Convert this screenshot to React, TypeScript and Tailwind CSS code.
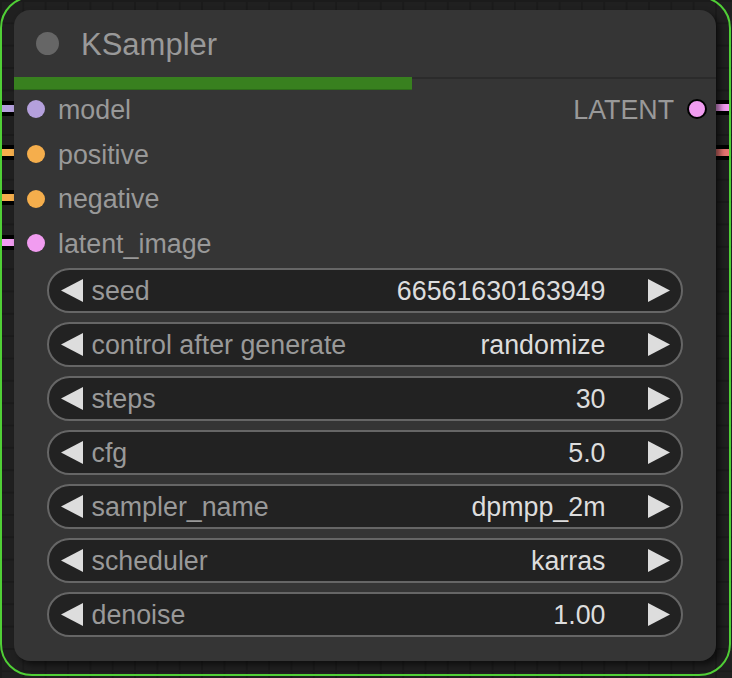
import React from "react";

const INPUTS = [
  { name: "model", color: "bg-[#b4a0dc]" },
  { name: "positive", color: "bg-[#f5ae4c]" },
  { name: "negative", color: "bg-[#f5ae4c]" },
  { name: "latent_image", color: "bg-[#f19cf0]" },
];

const WIDGETS = [
  { label: "seed", value: "66561630163949" },
  { label: "control after generate", value: "randomize" },
  { label: "steps", value: "30" },
  { label: "cfg", value: "5.0" },
  { label: "sampler_name", value: "dpmpp_2m" },
  { label: "scheduler", value: "karras" },
  { label: "denoise", value: "1.00" },
];

// link stubs leaving the node edges
const STUBS = [
  { top: "top-[101px]", left: "left-[2px]", color: "bg-[#b4a0dc]" },
  { top: "top-[145px]", left: "left-[2px]", color: "bg-[#f5ae4c]" },
  { top: "top-[190px]", left: "left-[2px]", color: "bg-[#f5ae4c]" },
  { top: "top-[235px]", left: "left-[2px]", color: "bg-[#f19cf0]" },
  { top: "top-[100px]", left: "left-[716px]", color: "bg-[#f19cf0]" },
  { top: "top-[145px]", left: "left-[716px]", color: "bg-[#e57370]" },
];

function Arrow({ dir }: { dir: "left" | "right" }) {
  return (
    <svg width="22" height="23" viewBox="0 0 22 23" className="shrink-0">
      <polygon points={dir === "left" ? "22,0 0,11.5 22,23" : "0,0 22,11.5 0,23"} fill="#dddddd" />
    </svg>
  );
}

export default function App() {
  return (
    <div
      className="relative w-[732px] h-[678px] overflow-hidden bg-[#202020] bg-[linear-gradient(#1b1b1b_2px,transparent_2px),linear-gradient(90deg,#1b1b1b_2px,transparent_2px)] bg-[length:22.35px_22.35px] pl-[14px] pt-[10px]"
      style={{ fontFamily: '"Liberation Sans", Arial, sans-serif' }}
    >
      {STUBS.map((s, i) => (
        <div key={i} className={`absolute ${s.top} ${s.left} w-[14px] h-[15px] bg-black py-[4px]`}>
          <div className={`h-[7px] ${s.color}`} />
        </div>
      ))}

      {/* Node */}
      <div className="relative w-[702px] h-[651px] rounded-[16px] bg-[#353535] shadow-[4px_4px_6px_rgba(0,0,0,0.55)] flex flex-col">
        {/* Title */}
        <div className="h-[67px] flex items-center shrink-0">
          <div className="ml-[22px] w-[23px] h-[23px] rounded-full bg-[#666666]" />
          <span className="ml-[22px] text-[31px] leading-none text-[#999999] translate-y-[1px]">KSampler</span>
        </div>

        {/* progress */}
        <div className="absolute left-0 top-[67px] w-[398px] h-[13px] bg-[#38801f] border-b border-[#2d6a1a]" />

        {/* Slots */}
        <div className="border-t-2 border-[#2b2b2b] pt-[8px] flex flex-col">
          {INPUTS.map((inp, i) => (
            <div key={inp.name} className="h-[44.7px] flex items-center">
              <div className={`ml-[13px] w-[18px] h-[18px] rounded-full ${inp.color}`} />
              <span className="ml-[13px] text-[26.8px] leading-none text-[#999999] translate-y-[1px]">{inp.name}</span>
              {i === 0 && (
                <div className="ml-auto flex items-center">
                  <span className="text-[26.8px] leading-none text-[#999999] translate-y-[1px]">LATENT</span>
                  <div className="ml-[13px] mr-[9px] w-[20px] h-[20px] rounded-full bg-[#f19cf0] border-2 border-black" />
                </div>
              )}
            </div>
          ))}
        </div>

        {/* Widgets */}
        <div className="mt-[2px] mx-[33px] flex flex-col gap-[9px]">
          {WIDGETS.map((w) => (
            <div
              key={w.label}
              className="h-[45px] rounded-full border-2 border-[#666666] bg-[#222222] flex items-center pl-[11.5px] pr-[11.5px]"
            >
              <Arrow dir="left" />
              <span className="ml-[9px] text-[26.8px] leading-none text-[#999999] translate-y-[1px]">{w.label}</span>
              <span className="ml-auto mr-[42px] text-[26.8px] leading-none text-[#dddddd] translate-y-[1px]">{w.value}</span>
              <Arrow dir="right" />
            </div>
          ))}
        </div>
      </div>

      {/* selection outline */}
      <div className="absolute left-0 top-[-4px] w-[731px] h-[680px] rounded-[32px] border-2 border-[#50cf36] pointer-events-none" />
    </div>
  );
}
